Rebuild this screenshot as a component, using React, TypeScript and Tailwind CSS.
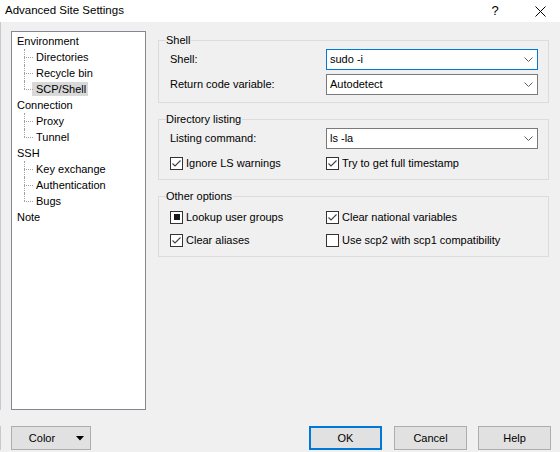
import React from "react";

type TreeNode = { label: string; children?: string[] };

const tree: TreeNode[] = [
  { label: "Environment", children: ["Directories", "Recycle bin", "SCP/Shell"] },
  { label: "Connection", children: ["Proxy", "Tunnel"] },
  { label: "SSH", children: ["Key exchange", "Authentication", "Bugs"] },
  { label: "Note" },
];

const selected = "SCP/Shell";

function Chevron() {
  return (
    <svg width="9" height="5" viewBox="0 0 9 5" className="shrink-0">
      <path d="M0.5 0.5 L4.5 4.5 L8.5 0.5" fill="none" stroke="#606060" strokeWidth="1" />
    </svg>
  );
}

function Combo({ value, focused }: { value: string; focused?: boolean }) {
  return (
    <div
      className={`flex items-center justify-between w-[212px] h-[21px] bg-white border pl-[3px] pr-[4px] ${
        focused ? "border-[#0078d7]" : "border-[#7a7a7a]"
      }`}
    >
      <span>{value}</span>
      <Chevron />
    </div>
  );
}

function Check({ label, state }: { label: string; state: "on" | "off" | "mixed" }) {
  return (
    <div className="flex items-center h-[16px]">
      <div className="w-[13px] h-[13px] border border-[#333333] bg-white flex items-center justify-center shrink-0">
        {state === "on" && (
          <svg width="11" height="11" viewBox="0 0 11 11">
            <path d="M1.5 5.5 L4 8 L9.5 2.5" fill="none" stroke="#404040" strokeWidth="1.1" />
          </svg>
        )}
        {state === "mixed" && <div className="w-[6px] h-[6px] bg-[#1a1a1a]" />}
      </div>
      <span className="ml-[3px]">{label}</span>
    </div>
  );
}

function Group({ title, children, className }: { title: string; children: React.ReactNode; className?: string }) {
  return (
    <fieldset className={`border border-[#dcdcdc] px-[7px] pb-[7px] ${className ?? ""}`}>
      <legend className="leading-[14px] pr-[1px]">{title}</legend>
      <div className="pl-[4px]">{children}</div>
    </fieldset>
  );
}

function Button({ children, primary, className }: { children: React.ReactNode; primary?: boolean; className?: string }) {
  return (
    <div
      className={`h-[24px] bg-[#e1e1e1] flex items-center justify-center ${
        primary ? "border-2 border-[#0078d7]" : "border border-[#adadad]"
      } ${className ?? ""}`}
    >
      {children}
    </div>
  );
}

export default function App() {
  return (
    <div
      className="w-[560px] h-[452px] bg-[#f0f0f0] text-black text-[11px] flex flex-col overflow-hidden"
      style={{ fontFamily: '"Liberation Sans", Arial, sans-serif' }}
    >
      {/* title bar */}
      <div className="h-[22px] bg-white flex items-center shrink-0">
        <span className="pl-[5px] text-[11.5px] flex-1">Advanced Site Settings</span>
        <span className="text-[13px] w-[12px] text-center mr-[34px]">?</span>
        <svg width="11" height="11" viewBox="0 0 11 11" className="mr-[14px]">
          <path d="M0.5 0.5 L10.5 10.5 M10.5 0.5 L0.5 10.5" stroke="#000" strokeWidth="1" />
        </svg>
      </div>

      <div className="flex pl-[10px] pr-[11px] pt-[9px] border-l border-[#c8c8c8]">
        {/* tree */}
        <div className="w-[135px] h-[379px] bg-white border border-[#828790] pt-[1px] pl-[5px] shrink-0">
          {tree.map((node) => (
            <div key={node.label}>
              <div className="h-[16px] flex items-center">{node.label}</div>
              {node.children?.map((child, i) => {
                const last = i === node.children!.length - 1;
                return (
                  <div key={child} className="h-[16px] flex items-center pl-[7px]">
                    <div className="relative w-[8px] h-[16px] shrink-0">
                      <div
                        className={`absolute left-0 top-0 border-l border-dotted border-[#a0a0a0] ${
                          last ? "h-[8px]" : "h-[16px]"
                        }`}
                      />
                      <div className="absolute left-0 top-[8px] w-[9px] border-t border-dotted border-[#a0a0a0]" />
                    </div>
                    <span
                      className={`pl-[4px] pr-[2px] h-[14px] flex items-center ${
                        child === selected ? "bg-[#d9d9d9]" : ""
                      }`}
                    >
                      {child}
                    </span>
                  </div>
                );
              })}
            </div>
          ))}
        </div>

        {/* settings */}
        <div className="ml-[12px] w-[393px] pt-[2px] flex flex-col">
          <Group title="Shell">
            <div className="grid grid-cols-[156px_212px] gap-y-[4px] mt-[2px] items-center">
              <span>Shell:</span>
              <Combo value="sudo -i" focused />
              <span>Return code variable:</span>
              <Combo value="Autodetect" />
            </div>
          </Group>

          <Group title="Directory listing" className="mt-[9px] pb-[8px]">
            <div className="grid grid-cols-[156px_212px] mt-[2px] items-center">
              <span>Listing command:</span>
              <Combo value="ls -la" />
            </div>
            <div className="grid grid-cols-[156px_212px] mt-[6px]">
              <Check label="Ignore LS warnings" state="on" />
              <Check label="Try to get full timestamp" state="on" />
            </div>
          </Group>

          <Group title="Other options" className="mt-[9px] pb-[8px]">
            <div className="grid grid-cols-[156px_212px] gap-y-[7px] mt-[6px]">
              <Check label="Lookup user groups" state="mixed" />
              <Check label="Clear national variables" state="on" />
              <Check label="Clear aliases" state="on" />
              <Check label="Use scp2 with scp1 compatibility" state="off" />
            </div>
          </Group>
        </div>
      </div>

      {/* bottom buttons */}
      <div className="flex items-center pl-[10px] pr-[11px] mt-[16px] border-l border-[#c8c8c8]">
        <Button className="w-[80px] relative">
          <span className="mr-[18px]">Color</span>
          <svg width="8" height="5" viewBox="0 0 8 5" className="absolute right-[6px] top-[9px]">
            <path d="M0 0 L8 0 L4 4.5 Z" fill="#000" />
          </svg>
        </Button>
        <div className="flex-1" />
        <Button primary className="w-[73px]">OK</Button>
        <Button className="w-[73px] ml-[12px]">Cancel</Button>
        <Button className="w-[73px] ml-[11px] mr-[-2px]">Help</Button>
      </div>
    </div>
  );
}
